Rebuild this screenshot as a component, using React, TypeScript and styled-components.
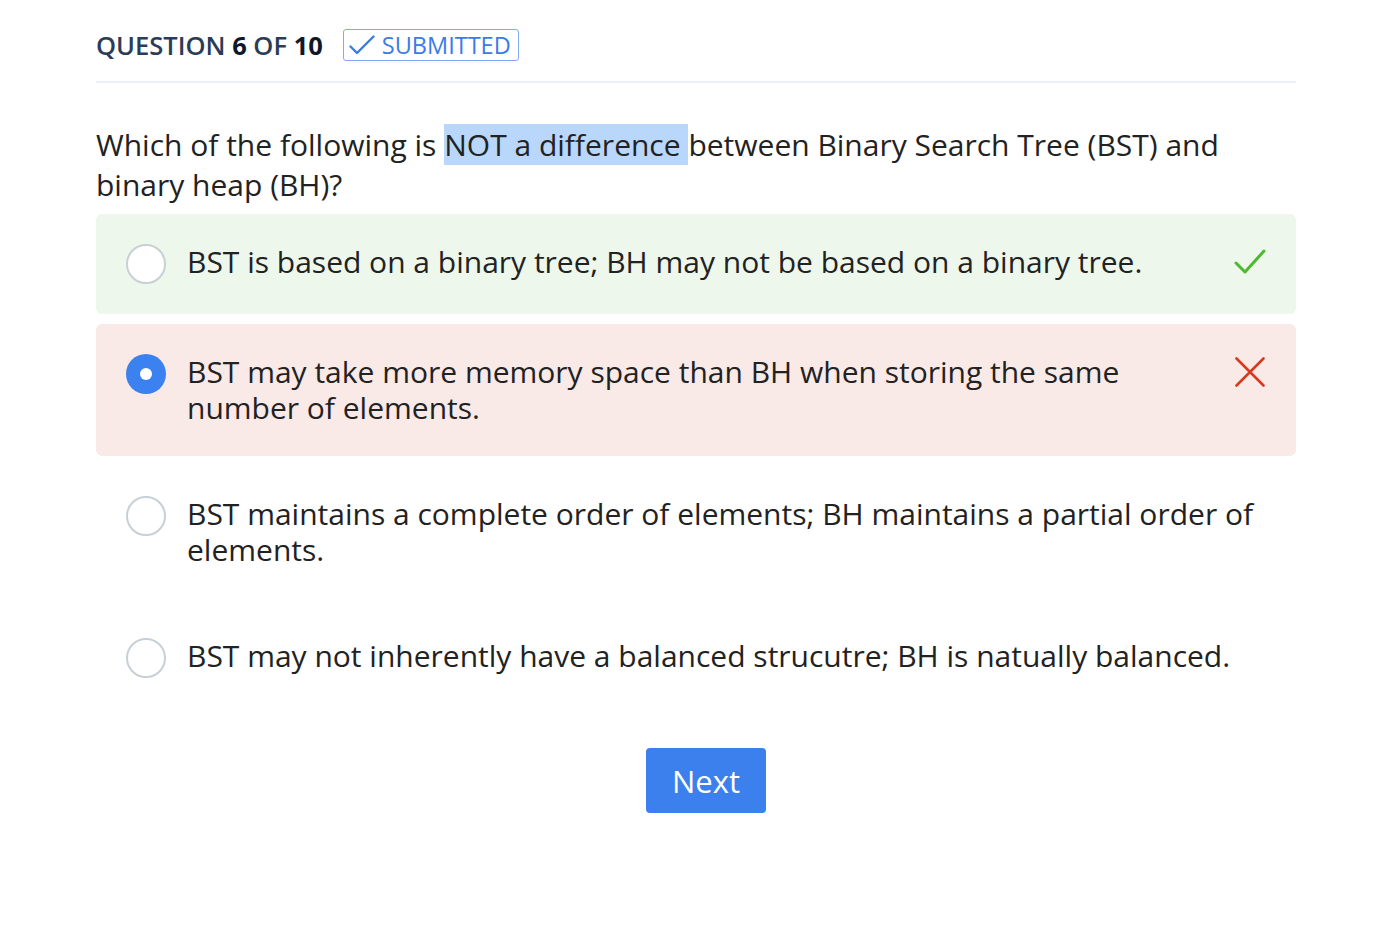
import React from "react";
import styled, { createGlobalStyle } from "styled-components";

const Global = createGlobalStyle`
  html, body { margin: 0; padding: 0; background: #ffffff; }
  body { font-family: "Open Sans", "Noto Sans", sans-serif; color: #222; }
`;

const Page = styled.div`
  width: 1200px;
  padding: 28px 0 0 96px;
`;

const Header = styled.div`
  display: flex;
  align-items: center;
  gap: 20px;
  height: 34px;
  padding-bottom: 19px;
  border-bottom: 2px solid #e9f1fb;
`;

const Counter = styled.div`
  font-size: 25.5px;
  font-weight: 600;
  color: #2a3c58;
  b { font-weight: 700; color: #0f1829; }
`;

const Badge = styled.div`
  display: flex;
  align-items: center;
  gap: 7px;
  height: 30px;
  padding: 0 7px 0 5px;
  border: 1.5px solid #82abf3;
  border-radius: 3px;
  color: #3a7be6;
  font-size: 23.5px;
  font-weight: 500;
`;

const Question = styled.p`
  margin: 42px 0 9px;
  font-size: 30px;
  line-height: 40px;
  color: #222;
`;

const Highlight = styled.span`
  background: #b9d6fb;
`;

const Options = styled.div`
  display: flex;
  flex-direction: column;
  gap: 10px;
`;

type Status = "correct" | "wrong" | "none";

const Option = styled.div<{ $status: Status }>`
  display: flex;
  align-items: flex-start;
  gap: 21px;
  padding: 30px;
  border-radius: 6px;
  background: ${(p) =>
    p.$status === "correct" ? "#edf7ec" : p.$status === "wrong" ? "#f9e9e7" : "transparent"};
`;

const Radio = styled.div<{ $checked: boolean }>`
  flex: none;
  width: 40px;
  height: 40px;
  box-sizing: border-box;
  border-radius: 50%;
  display: flex;
  align-items: center;
  justify-content: center;
  background: ${(p) => (p.$checked ? "#3b82f0" : "#ffffff")};
  border: ${(p) => (p.$checked ? "none" : "2px solid #c8d0d6")};
  &::after {
    content: "";
    display: ${(p) => (p.$checked ? "block" : "none")};
    width: 12px;
    height: 12px;
    border-radius: 50%;
    background: #fff;
  }
`;

const OptionText = styled.div`
  flex: 1;
  font-size: 30px;
  line-height: 36px;
  color: #222;
`;

const Mark = styled.div`
  flex: none;
  width: 32px;
  height: 36px;
  margin-left: 6px;
  display: flex;
  align-items: center;
  justify-content: center;
`;

const Footer = styled.div`
  display: flex;
  justify-content: center;
  padding: 40px 0 0 20px;
`;

const NextButton = styled.button`
  width: 120px;
  height: 65px;
  border: none;
  border-radius: 4px;
  background: #3b80ec;
  color: #fff;
  font-family: "Open Sans", "Noto Sans", sans-serif;
  font-size: 31px;
  font-weight: 500;
  cursor: pointer;
`;

const SmallCheck = () => (
  <svg width="26" height="20" viewBox="0 0 26 20" fill="none">
    <path d="M1.5 11.5l6.5 6.5L24.5 1.5" stroke="#3a7be6" strokeWidth="2.4" strokeLinecap="round" strokeLinejoin="round" />
  </svg>
);

const BigCheck = () => (
  <svg width="32" height="26" viewBox="0 0 32 26" fill="none">
    <path d="M2 14l9 9L30 2" stroke="#4cba2c" strokeWidth="3" strokeLinecap="round" strokeLinejoin="round" />
  </svg>
);

const Cross = () => (
  <svg width="30" height="30" viewBox="0 0 30 30" fill="none">
    <path d="M1.5 1.5l27 27M28.5 1.5l-27 27" stroke="#d63b1f" strokeWidth="2.6" strokeLinecap="round" />
  </svg>
);

const options: { text: string; status: Status; checked: boolean }[] = [
  { text: "BST is based on a binary tree; BH may not be based on a binary tree.", status: "correct", checked: false },
  { text: "BST may take more memory space than BH when storing the same number of elements.", status: "wrong", checked: true },
  { text: "BST maintains a complete order of elements; BH maintains a partial order of elements.", status: "none", checked: false },
  { text: "BST may not inherently have a balanced strucutre; BH is natually balanced.", status: "none", checked: false },
];

export default function App() {
  return (
    <>
      <Global />
      <Page>
        <Header>
          <Counter>
            QUESTION <b>6</b> OF <b>10</b>
          </Counter>
          <Badge>
            <SmallCheck />
            SUBMITTED
          </Badge>
        </Header>
        <Question>
          Which of the following is <Highlight>NOT a difference </Highlight>between Binary Search Tree (BST) and binary heap (BH)?
        </Question>
        <Options>
          {options.map((o, i) => (
            <Option key={i} $status={o.status}>
              <Radio $checked={o.checked} />
              <OptionText>{o.text}</OptionText>
              {o.status === "correct" && (
                <Mark>
                  <BigCheck />
                </Mark>
              )}
              {o.status === "wrong" && (
                <Mark>
                  <Cross />
                </Mark>
              )}
            </Option>
          ))}
        </Options>
        <Footer>
          <NextButton>Next</NextButton>
        </Footer>
      </Page>
    </>
  );
}
